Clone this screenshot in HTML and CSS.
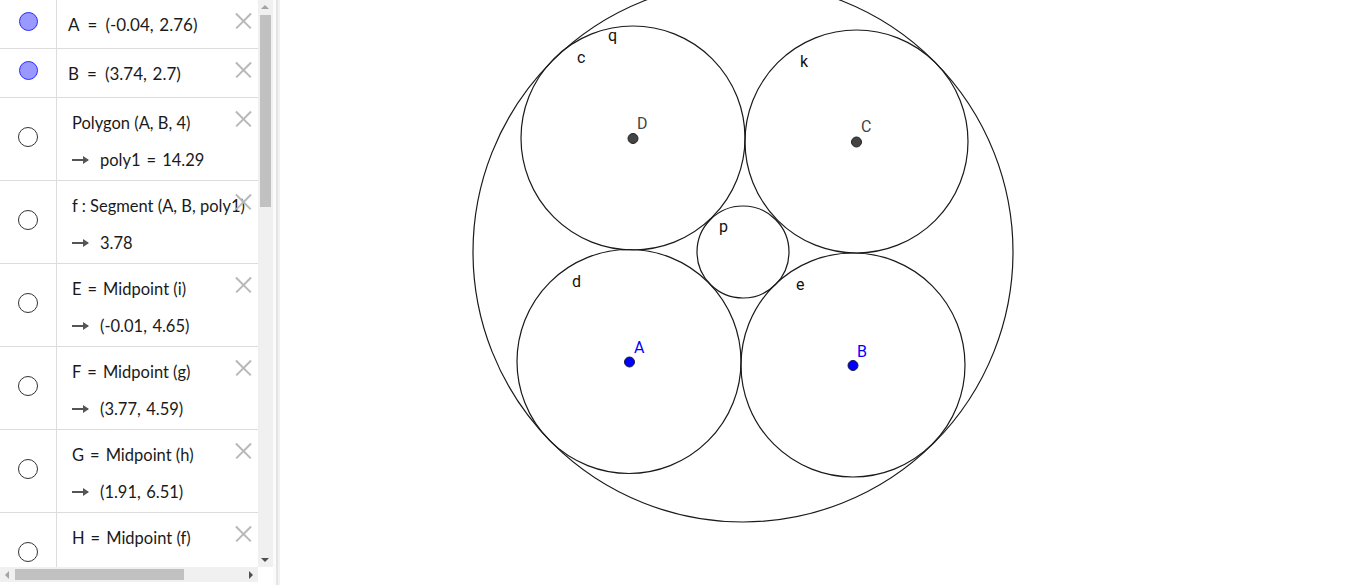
FILE: index.html
```html
<!DOCTYPE html>
<html>
<head>
<meta charset="utf-8">
<link rel="stylesheet" href="styles.css">
</head>
<body>
<div class="app">
  <aside class="sidebar">
    <div class="panel">
      <div class="algebra">
        <div class="row single">
          <div class="marker"><span class="dot filled"></span></div>
          <div class="body"><div class="line def pt">A<span class="eq">=</span>(-0.04,&#8196;2.76)</div></div>
          <span class="close"></span>
        </div>
        <div class="row single">
          <div class="marker"><span class="dot filled"></span></div>
          <div class="body"><div class="line def pt">B<span class="eq">=</span>(3.74,&#8196;2.7)</div></div>
          <span class="close"></span>
        </div>
        <div class="row double">
          <div class="marker"><span class="dot"></span></div>
          <div class="body">
            <div class="line def">Polygon (A, B, 4)</div>
            <div class="line out"><span class="arrow"></span>poly1<span class="eq">=</span>14.29</div>
          </div>
          <span class="close"></span>
        </div>
        <div class="row double">
          <div class="marker"><span class="dot"></span></div>
          <div class="body">
            <div class="line def">f : Segment (A, B, poly1)</div>
            <div class="line out"><span class="arrow"></span>3.78</div>
          </div>
          <span class="close"></span>
        </div>
        <div class="row double">
          <div class="marker"><span class="dot"></span></div>
          <div class="body">
            <div class="line def">E<span class="eq">=</span>Midpoint (i)</div>
            <div class="line out"><span class="arrow"></span>(-0.01,&#8196;4.65)</div>
          </div>
          <span class="close"></span>
        </div>
        <div class="row double">
          <div class="marker"><span class="dot"></span></div>
          <div class="body">
            <div class="line def">F<span class="eq">=</span>Midpoint (g)</div>
            <div class="line out"><span class="arrow"></span>(3.77,&#8196;4.59)</div>
          </div>
          <span class="close"></span>
        </div>
        <div class="row double">
          <div class="marker"><span class="dot"></span></div>
          <div class="body">
            <div class="line def">G<span class="eq">=</span>Midpoint (h)</div>
            <div class="line out"><span class="arrow"></span>(1.91,&#8196;6.51)</div>
          </div>
          <span class="close"></span>
        </div>
        <div class="row double">
          <div class="marker"><span class="dot"></span></div>
          <div class="body">
            <div class="line def">H<span class="eq">=</span>Midpoint (f)</div>
            <div class="line out"><span class="arrow"></span>(1.89,&#8196;2.72)</div>
          </div>
          <span class="close"></span>
        </div>
      </div>
      <div class="vscroll">
        <span class="tri up"></span>
        <span class="vthumb"></span>
        <span class="tri down"></span>
      </div>
      <div class="hscroll">
        <span class="tri left"></span>
        <span class="hthumb"></span>
        <span class="tri right"></span>
      </div>
      <div class="corner"></div>
    </div>
    <div class="splitter"></div>
  </aside>
  <main class="canvas">
    <svg class="graphics" width="1086" height="585" viewBox="280 0 1086 585" xmlns="http://www.w3.org/2000/svg">
      <g fill="none" stroke="#1a1a1a" stroke-width="1.2">
        <circle cx="743" cy="252" r="270"/>
        <circle cx="633" cy="138" r="112"/>
        <circle cx="856.5" cy="141.5" r="111.5"/>
        <circle cx="629" cy="361.5" r="112"/>
        <circle cx="853" cy="365" r="112"/>
        <circle cx="743" cy="252" r="46"/>
      </g>
      <g class="lbl">
        <text x="577" y="63">c</text>
        <text x="608" y="41">q</text>
        <text x="800" y="67">k</text>
        <text x="719" y="232">p</text>
        <text x="572" y="287">d</text>
        <text x="796" y="290">e</text>
      </g>
      <g class="ptlbl">
        <text x="637" y="129" fill="#444">D</text>
        <text x="861" y="132" fill="#444">C</text>
        <text x="634" y="353" fill="#0000ff">A</text>
        <text x="857" y="357" fill="#0000ff">B</text>
      </g>
      <circle cx="633" cy="138.5" r="5" fill="#444" stroke="#222" stroke-width="1"/>
      <circle cx="856.5" cy="142" r="5" fill="#444" stroke="#222" stroke-width="1"/>
      <circle cx="629.5" cy="362" r="5" fill="#0000ff" stroke="#1a1a40" stroke-width="1"/>
      <circle cx="853" cy="365.5" r="5" fill="#0000ff" stroke="#1a1a40" stroke-width="1"/>
    </svg>
  </main>
</div>
</body>
</html>
```

FILE: styles.css
```css
* { box-sizing: border-box; }
html, body { margin: 0; padding: 0; background: #fff; overflow: hidden; }
body { font-family: Lato, "Noto Sans", "Liberation Sans", sans-serif; color: #1a1a1a; }

.app { display: flex; width: 1366px; height: 585px; }

.sidebar { display: flex; width: 280px; height: 585px; flex: none; }

.panel {
  display: grid;
  grid-template-columns: 258px 15px;
  grid-template-rows: 567px 15px 3px;
  width: 273px;
}

.algebra { overflow: hidden; grid-column: 1; grid-row: 1; }

.row {
  position: relative;
  display: flex;
  border-bottom: 1px solid #dcdcdc;
}
.row.single { height: 49px; }
.row.double { height: 83px; }

.marker {
  width: 57px;
  flex: none;
  border-right: 1px solid #dcdcdc;
  display: flex;
  justify-content: center;
  align-items: center;
}
.row.single .marker { align-items: flex-start; padding-top: 12px; }
.row.double .marker { padding-bottom: 4px; }

.dot {
  width: 20px; height: 20px;
  border-radius: 50%;
  border: 1px solid #333;
  background: #fff;
}
.dot.filled { width: 19px; height: 19px; background: #9999ff; border-color: #2b2bff; }

.body { padding-top: 13px; padding-left: 11px; }
.row.double .body { padding-left: 15px; }

.line {
  height: 24px;
  line-height: 24px;
  font-size: 16.5px;
  white-space: nowrap;
}
.line.pt { font-size: 17px; }
.line.out { margin-top: 13px; display: flex; align-items: center; }

.eq { display: inline-block; margin: 0 6px; }
.line.pt .eq { margin: 0 8px; }

.arrow {
  position: relative;
  width: 16px; height: 2px;
  background: #555;
  margin-right: 12px;
}
.arrow::after {
  content: "";
  position: absolute;
  right: -1px; top: -3px;
  border-left: 6px solid #555;
  border-top: 4px solid transparent;
  border-bottom: 4px solid transparent;
}

.close {
  position: absolute;
  right: 6px; top: 12px;
  width: 17px; height: 17px;
}
.close::before, .close::after {
  content: "";
  position: absolute;
  left: -2px; top: 7.5px;
  width: 21px; height: 1.6px;
  background: #b8b8b8;
  transform: rotate(45deg);
}
.close::after { transform: rotate(-45deg); }

.vscroll {
  grid-column: 2; grid-row: 1;
  position: relative;
  background: #f0f0f0;
}
.vthumb {
  position: absolute;
  left: 2px; top: 15px;
  width: 11px; height: 192px;
  background: #c1c1c1;
}
.hscroll {
  grid-column: 1; grid-row: 2;
  position: relative;
  background: #f0f0f0;
}
.hthumb {
  position: absolute;
  left: 15px; top: 2px;
  width: 169px; height: 11px;
  background: #c1c1c1;
}
.corner { grid-column: 2; grid-row: 2; background: #fff; }

.tri { position: absolute; width: 0; height: 0; }
.tri.up { left: 3px; top: 5px; border-left: 4px solid transparent; border-right: 4px solid transparent; border-bottom: 4px solid #a3a3a3; }
.tri.down { left: 3px; bottom: 5px; border-left: 4px solid transparent; border-right: 4px solid transparent; border-top: 4px solid #505050; }
.tri.left { left: 5px; top: 4px; border-top: 4px solid transparent; border-bottom: 4px solid transparent; border-right: 4px solid #a3a3a3; }
.tri.right { right: 5px; top: 4px; border-top: 4px solid transparent; border-bottom: 4px solid transparent; border-left: 4px solid #505050; }

.splitter {
  width: 7px;
  height: 585px;
  background: linear-gradient(to right, #fbfbfb 0 3px, #e4e4e4 3px 5px, #f2f2f2 5px 7px);
}

.canvas { flex: 1; height: 585px; }
.graphics { display: block; }
.graphics text { font-family: Roboto, "Noto Sans", sans-serif; font-size: 16px; }
.lbl text { fill: #111; }
```
